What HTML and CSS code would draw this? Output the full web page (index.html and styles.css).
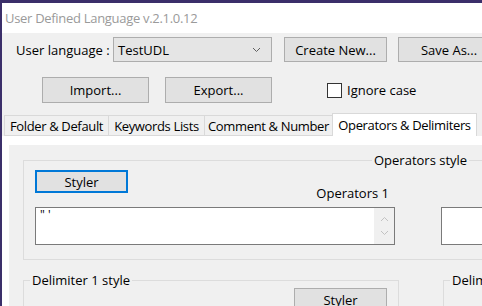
FILE: index.html
```html
<!DOCTYPE html>
<html lang="en">
<head>
  <meta charset="UTF-8" />
  <title>User Defined Language</title>
  <link rel="stylesheet" href="styles.css">
</head>
<body>

<div class="window">
  <div class="titlebar">User Defined Language v.2.1.0.12</div>

  <div class="dialog">
    <div class="row top-row">
      <span class="lbl">User language :</span>
      <div class="combo">
        <span>TestUDL</span>
        <svg width="9" height="6" viewBox="0 0 9 6"><path d="M1 1 L4.5 4.5 L8 1" fill="none" stroke="#606060" stroke-width="1"/></svg>
      </div>
      <button class="btn create">Create New...</button>
      <button class="btn saveas">Save As...</button>
    </div>

    <div class="row io-row">
      <button class="btn io">Import...</button>
      <button class="btn io">Export...</button>
      <label class="check"><span class="box"></span>Ignore case</label>
    </div>

    <div class="tabs">
      <div class="tab t1">Folder &amp; Default</div>
      <div class="tab t2">Keywords Lists</div>
      <div class="tab t3">Comment &amp; Number</div>
      <div class="tab active t4">Operators &amp; Delimiters</div>
    </div>

    <div class="tabbody">
      <div class="page">
        <fieldset class="group ops">
          <legend>Operators style</legend>
          <button class="btn styler focused">Styler</button>
          <div class="op-cols">
            <div class="op-col">
              <div class="op-label">Operators 1</div>
              <div class="field">
                <span class="field-text">" '</span>
                <div class="scroll">
                  <svg width="9" height="6" viewBox="0 0 9 6"><path d="M1 5 L4.5 1.5 L8 5" fill="none" stroke="#c2c2c2" stroke-width="1"/></svg>
                  <svg width="9" height="6" viewBox="0 0 9 6"><path d="M1 1 L4.5 4.5 L8 1" fill="none" stroke="#c2c2c2" stroke-width="1"/></svg>
                </div>
              </div>
            </div>
            <div class="op-col second">
              <div class="op-label">&nbsp;</div>
              <div class="field"></div>
            </div>
          </div>
        </fieldset>

        <div class="delims">
          <fieldset class="group delim">
            <legend>Delimiter 1 style</legend>
            <button class="btn styler right">Styler</button>
          </fieldset>
          <fieldset class="group delim2">
            <legend>Delimiter 2 style</legend>
          </fieldset>
        </div>
      </div>
    </div>
  </div>
</div>

</body>
</html>
```

FILE: styles.css
```css
html, body { margin: 0; overflow: hidden; }
body {
  font-family: "Open Sans", "Noto Sans", sans-serif;
  font-size: 13px;
  color: #000;
  background: #f0f0f0;
}

.window {
  width: 560px;
  height: 320px;
  border-top: 3px solid #3b2f6a;
  border-left: 2px solid #3b2f6a;
  background: #f0f0f0;
}

.titlebar {
  height: 30px;
  background: #fff;
  color: #9a9a9a;
  font-size: 13px;
  letter-spacing: -0.3px;
  line-height: 30px;
  padding-left: 3px;
}

.dialog { padding-top: 4px; }

.row { display: flex; align-items: center; }
.top-row { padding-left: 14px; height: 25px; }
.lbl { width: 97px; }

.combo {
  border: 1px solid #adadad;
  background: #e5e5e5;
  display: flex;
  align-items: center;
  justify-content: space-between;
  padding: 0 10px 0 4px;
  box-sizing: border-box;
  width: 159px;
  height: 25px;
}

.btn {
  font-family: inherit;
  font-size: 13px;
  color: #000;
  background: #e1e1e1;
  border: 1px solid #adadad;
  padding: 0;
  box-sizing: border-box;
}
.create { width: 103px; height: 25px; margin-left: 12px; }
.saveas { width: 102px; height: 25px; margin-left: 11px; }

.io-row { margin-top: 15px; padding-left: 40px; height: 26px; }
.io { width: 107px; height: 26px; margin-right: 16px; }

.check { display: flex; align-items: center; margin-left: 39px; }
.box {
  width: 13px;
  height: 13px;
  border: 1px solid #333;
  background: #fff;
  margin-right: 5px;
}

.tabs {
  display: flex;
  align-items: flex-end;
  margin-top: 10px;
  padding-left: 2px;
  height: 23px;
}
.tab {
  height: 21px;
  line-height: 20px;
  box-sizing: border-box;
  border: 1px solid #d9d9d9;
  border-right: none;
  background: #f0f0f0;
  text-align: center;
  letter-spacing: -0.35px;
  white-space: nowrap;
}
.t1 { width: 104px; }
.t2 { width: 96px; }
.t3 { width: 128px; }
.t4 { width: 145px; }
.tab.active {
  height: 23px;
  line-height: 22px;
  background: #fff;
  border-right: 1px solid #d9d9d9;
  border-bottom: none;
}

.tabbody {
  background: #fff;
  padding: 9px 0 0 7px;
}

.page {
  background: #f0f0f0;
  padding: 7px 0 20px 14px;
}

.group {
  margin: 0;
  border: 1px solid #dcdcdc;
  padding: 0 11px;
}
.group legend {
  padding: 0 2px;
  line-height: 16px;
  white-space: nowrap;
}

.ops { padding-bottom: 14px; }
.ops legend { margin-left: 337px; }

.styler { width: 93px; height: 23px; }
.focused { border: 2px solid #0078d7; margin-top: 2px; }

.op-cols { display: flex; margin-top: -7px; }
.op-col { width: 360px; }
.op-col.second { margin-left: 46px; width: 120px; }
.op-label {
  text-align: right;
  padding-right: 6px;
  height: 14px;
  line-height: 14px;
  margin-bottom: 7px;
}

.field {
  height: 38px;
  border: 1px solid #7a7a7a;
  background: #fff;
  box-sizing: border-box;
  display: flex;
  justify-content: space-between;
}
.field-text { padding: 1px 4px; line-height: 12px; font-size: 12px; }
.scroll {
  width: 20px;
  background: #f0f0f0;
  display: flex;
  flex-direction: column;
  align-items: center;
  justify-content: space-around;
  padding: 4px 0;
}

.delims { display: flex; margin-top: 12px; }
.delim {
  width: 372px;
  height: 40px;
  box-sizing: border-box;
  border-bottom: none;
}
.delim legend { margin-left: -5px; }
.right { margin-left: 259px; margin-top: 0; }
.delim2 {
  margin-left: 44px;
  width: 120px;
  height: 40px;
  border-bottom: none;
}
.delim2 legend { margin-left: -5px; }
```
